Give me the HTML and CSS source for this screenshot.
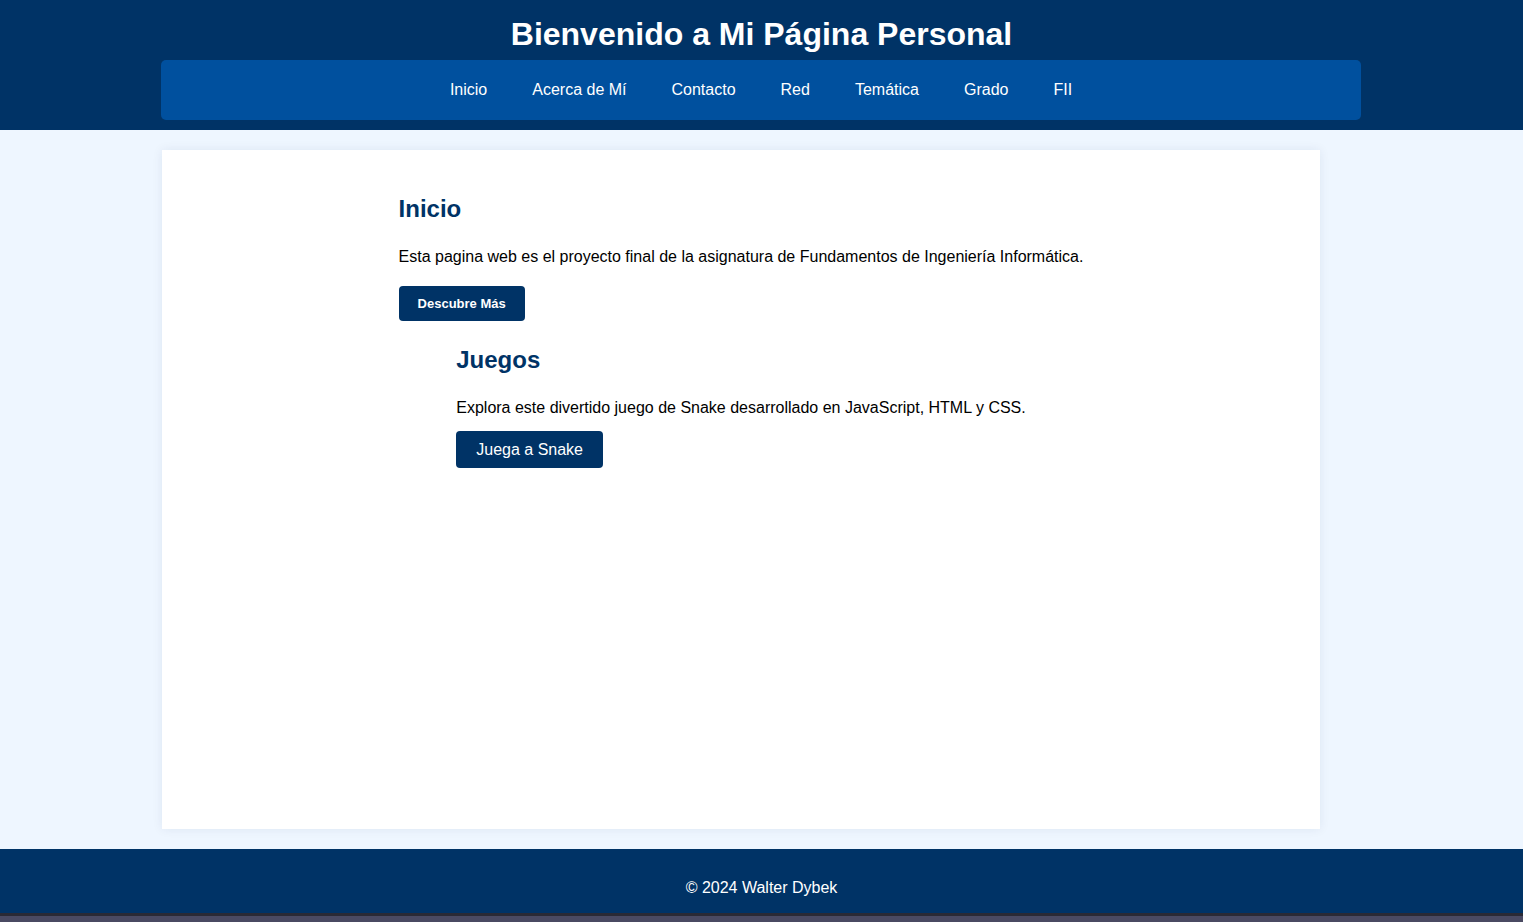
FILE: index.html
```html
<!DOCTYPE html>
<html lang="es">
<head>
<meta charset="utf-8">
<title>Mi Página Personal</title>
<link rel="stylesheet" href="styles.css">
</head>
<body>
<header class="site-header">
  <h1 class="site-title">Bienvenido a Mi Página Personal</h1>
  <nav class="nav">
    <a class="nav-link" href="#">Inicio</a>
    <a class="nav-link" href="#">Acerca de Mí</a>
    <a class="nav-link" href="#">Contacto</a>
    <a class="nav-link" href="#">Red</a>
    <a class="nav-link" href="#">Temática</a>
    <a class="nav-link" href="#">Grado</a>
    <a class="nav-link" href="#">FII</a>
  </nav>
</header>
<main class="main">
  <div class="card">
    <section class="section">
      <h2 class="section-title">Inicio</h2>
      <p class="section-text">Esta pagina web es el proyecto final de la asignatura de Fundamentos de Ingeniería Informática.</p>
      <a class="btn btn-small" href="#">Descubre Más</a>
    </section>
    <section class="section section-games">
      <h2 class="section-title">Juegos</h2>
      <p class="section-text">Explora este divertido juego de Snake desarrollado en JavaScript, HTML y CSS.</p>
      <a class="btn btn-large" href="#">Juega a Snake</a>
    </section>
  </div>
</main>
<footer class="footer">
  <p class="footer-text">© 2024 Walter Dybek</p>
</footer>
<div class="bottom-strip"></div>
</body>
</html>
```

FILE: styles.css
```css
* { box-sizing: border-box; }
html, body { margin: 0; padding: 0; }
body {
  font-family: "Liberation Sans", Arial, sans-serif;
  background: #eef6ff;
  color: #000;
}
.site-header {
  background: #003366;
  height: 130px;
  padding-top: 14px;
  display: flex;
  flex-direction: column;
  align-items: center;
}
.site-title {
  margin: 0;
  color: #fff;
  font-size: 32px;
  line-height: 40px;
  font-weight: bold;
}
.nav {
  margin: 6px 0 0 -1px;
  width: 1200px;
  height: 60px;
  background: #00509e;
  border-radius: 5px;
  display: flex;
  justify-content: center;
  align-items: center;
  gap: 45px;
}
.nav-link {
  color: #fff;
  text-decoration: none;
  font-size: 16px;
}
.main {
  padding: 20px 0;
}
.card {
  width: 1158px;
  height: 679px;
  margin-left: 162px;
  background: #fff;
  box-shadow: 0 0 10px rgba(0, 40, 90, 0.08);
  padding-top: 44px;
  display: flex;
  flex-direction: column;
  align-items: center;
}
.section-title {
  margin: 0;
  color: #003366;
  font-size: 24px;
  line-height: 30px;
  font-weight: bold;
}
.section-text {
  margin: 23px 0 19px;
  font-size: 16px;
  line-height: 20px;
}
.btn {
  display: inline-block;
  background: #003366;
  color: #fff;
  text-decoration: none;
  border-radius: 4px;
}
.btn-small {
  font-size: 13px;
  font-weight: bold;
  padding: 0 19px;
  height: 35px;
  line-height: 35px;
}
.section-games {
  margin-top: 24px;
}
.section-games .section-text { margin: 23px 0 13px; }
.btn-large {
  font-size: 16px;
  padding: 0 20px;
  height: 37px;
  line-height: 37px;
}
.footer {
  background: #003366;
  height: 64px;
  padding-top: 29px;
  text-align: center;
}
.footer-text {
  margin: 0;
  color: #fff;
  font-size: 16px;
  line-height: 20px;
}
.bottom-strip {
  height: 9px;
  background: #4a4a62;
  border-top: 3px solid #2a2a35;
}
```
